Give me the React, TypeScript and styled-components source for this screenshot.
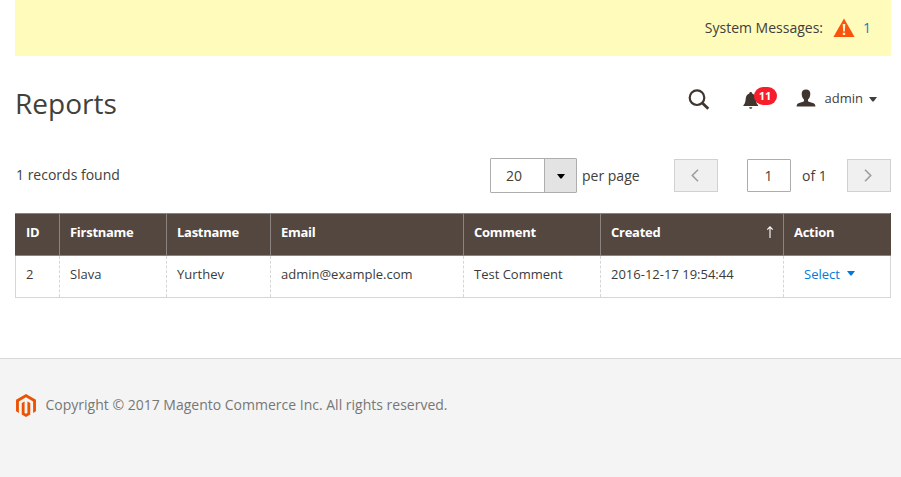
import React from 'react';
import styled, { createGlobalStyle } from 'styled-components';

const GlobalStyle = createGlobalStyle`
  *, *::before, *::after { box-sizing: border-box; }
  body {
    margin: 0;
    background: #fff;
    color: #41403b;
    font: 400 14px/20px 'Open Sans', 'Noto Sans', sans-serif;
  }
`;

const Page = styled.div`
  display: flex;
  flex-direction: column;
  height: 477px;
  overflow: hidden;
`;

const Content = styled.div`
  padding: 0 10px 0 15px;
  height: 358px;
`;

const Messages = styled.div`
  display: flex;
  align-items: center;
  justify-content: flex-end;
  height: 56px;
  padding-right: 20px;
  background: #fffbbb;
`;

const WarningIcon = styled.svg`
  width: 22px;
  height: 20px;
  margin: 0 8px 0 10px;
`;

const MessageLink = styled.a`
  color: #1979c3;
`;

const Header = styled.header`
  display: flex;
  justify-content: space-between;
  height: 102px;
`;

const Title = styled.h1`
  margin: 29px 0 0;
  font-size: 28px;
  font-weight: 400;
  line-height: 36px;
`;

const HeaderTools = styled.div`
  display: flex;
  align-items: center;
  height: 32px;
  margin: 27px 14px 0 0;
`;

const SearchIcon = styled.svg`
  width: 24px;
  height: 24px;
`;

const Notifications = styled.div`
  position: relative;
  display: flex;
  width: 34px;
  height: 24px;
  margin-left: 32px;
`;

const Badge = styled.span`
  position: absolute;
  left: 11px;
  top: 0;
  width: 23px;
  height: 18px;
  border-radius: 9px;
  background: #f81d2b;
  color: #fff;
  font-size: 11px;
  font-weight: 700;
  line-height: 18px;
  text-align: center;
`;

const BellIcon = styled.svg`
  width: 16px;
  height: 24px;
`;

const UserIcon = styled.svg`
  width: 20px;
  height: 18px;
  margin: 0 9px 2px 19px;
`;

const UserName = styled.span`
  font-size: 13px;
  line-height: 20px;
  margin-bottom: 2px;
`;

const Caret = styled.svg<{ $gap?: number }>`
  width: 8px;
  height: 5px;
  margin-left: ${({ $gap }) => $gap ?? 0}px;
  fill: currentColor;
`;

const Toolbar = styled.div`
  display: flex;
  align-items: flex-start;
  height: 55px;
`;

const RecordCount = styled.span`
  width: 475px;
  margin-top: 7px;
  padding-left: 1px;
`;

const PerPageSelect = styled.div`
  display: flex;
  width: 87px;
  height: 35px;
  border: 1px solid #adadad;
  border-radius: 1px;
  line-height: 34px;
`;

const SelectValue = styled.span`
  flex: 1;
  padding-left: 15px;
`;

const SelectArrow = styled.span`
  display: flex;
  align-items: center;
  justify-content: center;
  width: 32px;
  padding-top: 2px;
  border-left: 1px solid #adadad;
  background: #e3e3e3;
  color: #000;
`;

const PerPageLabel = styled.span`
  width: 92px;
  margin: 8px 0 0 5px;
`;

const PageButton = styled.button`
  display: flex;
  align-items: center;
  justify-content: center;
  width: 44px;
  height: 33px;
  margin-top: 1px;
  padding: 0 2px 1px 0;
  border: 1px solid #d1d1d1;
  background: #f0f0f0;
`;

const Chevron = styled.svg`
  width: 8px;
  height: 13px;
  fill: none;
  stroke: #9e9e9e;
  stroke-width: 1.6;
`;

const PageInput = styled.div`
  width: 44px;
  height: 33px;
  margin: 1px 11px 0 29px;
  border: 1px solid #adadad;
  border-radius: 1px;
  padding-right: 1px;
  line-height: 32px;
  text-align: center;
`;

const PageTotal = styled.span`
  flex: 1;
  margin-top: 8px;
`;

const Table = styled.table`
  width: 876px;
  table-layout: fixed;
  border-collapse: collapse;
  font-size: 13px;
  line-height: 18px;
`;

const HeadCell = styled.th`
  height: 42px;
  padding: 0 10px 5px;
  border: 1px solid #8a837f;
  background: #534740;
  color: #fff;
  font-weight: 700;
  letter-spacing: -0.27px;
  text-align: left;

  &:first-child { border-left-color: #534740; }
  &:last-child { border-right-color: #534740; }
`;

const HeadLabel = styled.div`
  display: flex;
  align-items: center;
  justify-content: space-between;
`;

const SortArrow = styled.svg`
  width: 8px;
  height: 12px;
  margin-right: -1px;
  fill: none;
  stroke: #fff;
  stroke-width: 1.1;
`;

const Cell = styled.td`
  height: 42px;
  padding: 0 10px 6px;
  border: 1px dashed #d6d6d6;
  border-bottom: 1px solid #d6d6d6;
  color: #3b3b3b;

  &:first-child { border-left-style: solid; }
  &:last-child { border-right-style: solid; }
`;

const ActionLink = styled.a`
  display: flex;
  align-items: center;
  margin-left: 10px;
  color: #007bdb;
`;

const Footer = styled.footer`
  display: flex;
  align-items: flex-start;
  flex: 1;
  padding: 35px 16px 0;
  border-top: 1px solid #d9d9d9;
  background: #f4f4f4;
  color: #777;
`;

const Logo = styled.svg`
  width: 20px;
  height: 23px;
  margin-right: 9.5px;
  fill: #eb5202;
`;

const Copyright = styled.span`
  margin-top: 1px;
`;

const columns = [
  { label: 'ID', width: 44 },
  { label: 'Firstname', width: 107 },
  { label: 'Lastname', width: 104 },
  { label: 'Email', width: 193 },
  { label: 'Comment', width: 137 },
  { label: 'Created', width: 183, sorted: true },
  { label: 'Action', width: 107 },
];

const records = [
  ['2', 'Slava', 'Yurthev', 'admin@example.com', 'Test Comment', '2016-12-17 19:54:44'],
];

const Column = styled.col<{ $width: number }>`
  width: ${({ $width }) => $width}px;
`;

function DownCaret({ gap }: { gap?: number }) {
  return (
    <Caret $gap={gap} viewBox="0 0 8 5">
      <path d="M0 0h8L4.6 4.6h-1.2z" />
    </Caret>
  );
}

export default function App() {
  return (
    <Page>
      <GlobalStyle />
      <Content>
        <Messages>
          <span>System Messages:</span>
          <WarningIcon viewBox="0 0 22 20">
            <path d="M11 .5 21.6 19H.4z" fill="#f8540c" />
            <path d="M9.700 6h2.600l-.5 7.600h-1.600zM9.800 14.800h2.400v2.300H9.800z" fill="#fff3d0" />
          </WarningIcon>
          <MessageLink>1</MessageLink>
        </Messages>

        <Header>
          <Title>Reports</Title>
          <HeaderTools>
            <SearchIcon viewBox="0 0 24 24" fill="none" stroke="#41362f">
              <circle cx="10" cy="10.700" r="7.300" strokeWidth="2.2" />
              <path d="m15.300 16 6 5.800" strokeWidth="2.8" />
            </SearchIcon>
            <Notifications>
              <BellIcon viewBox="0 0 16 24" fill="#41362f">
                <path d="M7.700 5c.9 0 1.400.6 1.400 1.500 2.200.7 3.300 2.400 3.600 4.600.4 3.300.4 5.200 2.400 7.200v.8H.4v-.8c2-2 2-3.900 2.400-7.200.3-2.200 1.400-3.900 3.500-4.600C6.300 5.600 6.800 5 7.700 5z" />
                <path d="M6.200 20.200h3c0 1-.7 1.600-1.500 1.600s-1.500-.6-1.500-1.600z" />
              </BellIcon>
              <Badge>11</Badge>
            </Notifications>
            <UserIcon viewBox="0 0 20 18" fill="#41362f">
              <path d="M10 .4c3 0 4.500 1.900 4.300 4.600-.1 2.400-.9 4.400-2.300 5.500v1.600c.6 1 2.500 1.300 4.900 2 1.800.6 2.500 1.500 2.500 3.500H.6c0-2 .7-2.900 2.500-3.500 2.400-.7 4.300-1 4.900-2v-1.600C6.600 9.400 5.800 7.400 5.700 5 5.500 2.300 7 .4 10 .4z" />
            </UserIcon>
            <UserName>admin</UserName>
            <DownCaret gap={6} />
          </HeaderTools>
        </Header>

        <Toolbar>
          <RecordCount>1 records found</RecordCount>
          <PerPageSelect>
            <SelectValue>20</SelectValue>
            <SelectArrow><DownCaret /></SelectArrow>
          </PerPageSelect>
          <PerPageLabel>per page</PerPageLabel>
          <PageButton aria-label="Previous page">
            <Chevron viewBox="0 0 8 13"><path d="M7 .7 1.300 6.500 7 12.300" /></Chevron>
          </PageButton>
          <PageInput>1</PageInput>
          <PageTotal>of 1</PageTotal>
          <PageButton aria-label="Next page">
            <Chevron viewBox="0 0 8 13"><path d="M1 .7 6.700 6.500 1 12.300" /></Chevron>
          </PageButton>
        </Toolbar>

        <Table>
          <colgroup>
            {columns.map((c) => <Column key={c.label} $width={c.width} />)}
          </colgroup>
          <thead>
            <tr>
              {columns.map((c) => (
                <HeadCell key={c.label}>
                  <HeadLabel>
                    {c.label}
                    {c.sorted && (
                      <SortArrow viewBox="0 0 8 12">
                        <path d="M4 12V1M1.300 3.600 4 .8l2.700 2.800" />
                      </SortArrow>
                    )}
                  </HeadLabel>
                </HeadCell>
              ))}
            </tr>
          </thead>
          <tbody>
            {records.map((row) => (
              <tr key={row[0]}>
                {row.map((value) => <Cell key={value}>{value}</Cell>)}
                <Cell>
                  <ActionLink>Select<DownCaret gap={7} /></ActionLink>
                </Cell>
              </tr>
            ))}
          </tbody>
        </Table>
      </Content>

      <Footer>
        <Logo viewBox="1.600 0 20.800 24">
          <path d="M12 24l-4.455-2.572v-12l2.970-1.715v12.001l1.485.902 1.485-.902V7.713l2.971 1.715v12L12 24zM22.391 6v12l-2.969 1.714V7.713L12 3.430 4.574 7.713v12.001L1.609 18V6L12 0l10.391 6z" />
        </Logo>
        <Copyright>Copyright © 2017 Magento Commerce Inc. All rights reserved.</Copyright>
      </Footer>
    </Page>
  );
}
